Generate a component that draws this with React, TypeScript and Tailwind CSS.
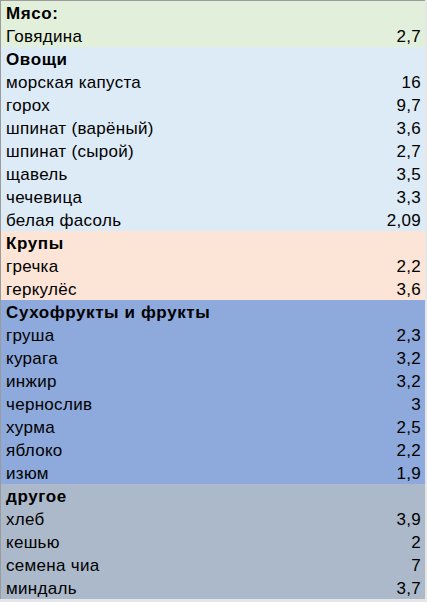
import React from "react";

type Row = { label: string; value?: string; bold?: boolean };
type Section = { bg: string; rows: Row[] };

const sections: Section[] = [
  {
    bg: "bg-[#e2efda]",
    rows: [{ label: "Мясо:", bold: true }, { label: "Говядина", value: "2,7" }],
  },
  {
    bg: "bg-[#ddebf7]",
    rows: [
      { label: "Овощи", bold: true },
      { label: "морская капуста", value: "16" },
      { label: "горох", value: "9,7" },
      { label: "шпинат (варёный)", value: "3,6" },
      { label: "шпинат (сырой)", value: "2,7" },
      { label: "щавель", value: "3,5" },
      { label: "чечевица", value: "3,3" },
      { label: "белая фасоль", value: "2,09" },
    ],
  },
  {
    bg: "bg-[#fce4d6]",
    rows: [
      { label: "Крупы", bold: true },
      { label: "гречка", value: "2,2" },
      { label: "геркулёс", value: "3,6" },
    ],
  },
  {
    bg: "bg-[#8ea9db]",
    rows: [
      { label: "Сухофрукты и фрукты", bold: true },
      { label: "груша", value: "2,3" },
      { label: "курага", value: "3,2" },
      { label: "инжир", value: "3,2" },
      { label: "чернослив", value: "3" },
      { label: "хурма", value: "2,5" },
      { label: "яблоко", value: "2,2" },
      { label: "изюм", value: "1,9" },
    ],
  },
  {
    bg: "bg-[#acb9ca]",
    rows: [
      { label: "другое", bold: true },
      { label: "хлеб", value: "3,9" },
      { label: "кешью", value: "2" },
      { label: "семена чиа", value: "7" },
      { label: "миндаль", value: "3,7" },
    ],
  },
];

export default function App() {
  return (
    <div
      className="w-[427px] h-[602px] bg-[#e6e6e6] overflow-hidden text-black"
      style={{ fontFamily: '"Liberation Sans", Arial, sans-serif' }}
    >
      <div className="w-[425px] border-t border-l border-[#9b9b9b]">
        {sections.map((s, i) => (
          <div key={i} className={s.bg}>
            {s.rows.map((r, j) => (
              <div
                key={j}
                className="h-[23px] pt-[2px] flex justify-between pl-[5px] pr-[4px] text-[17px] leading-[21px] tracking-[0.3px]"
              >
                <span className={r.bold ? "font-bold tracking-[0.6px]" : ""}>{r.label}</span>
                {r.value && <span>{r.value}</span>}
              </div>
            ))}
          </div>
        ))}
      </div>
    </div>
  );
}
